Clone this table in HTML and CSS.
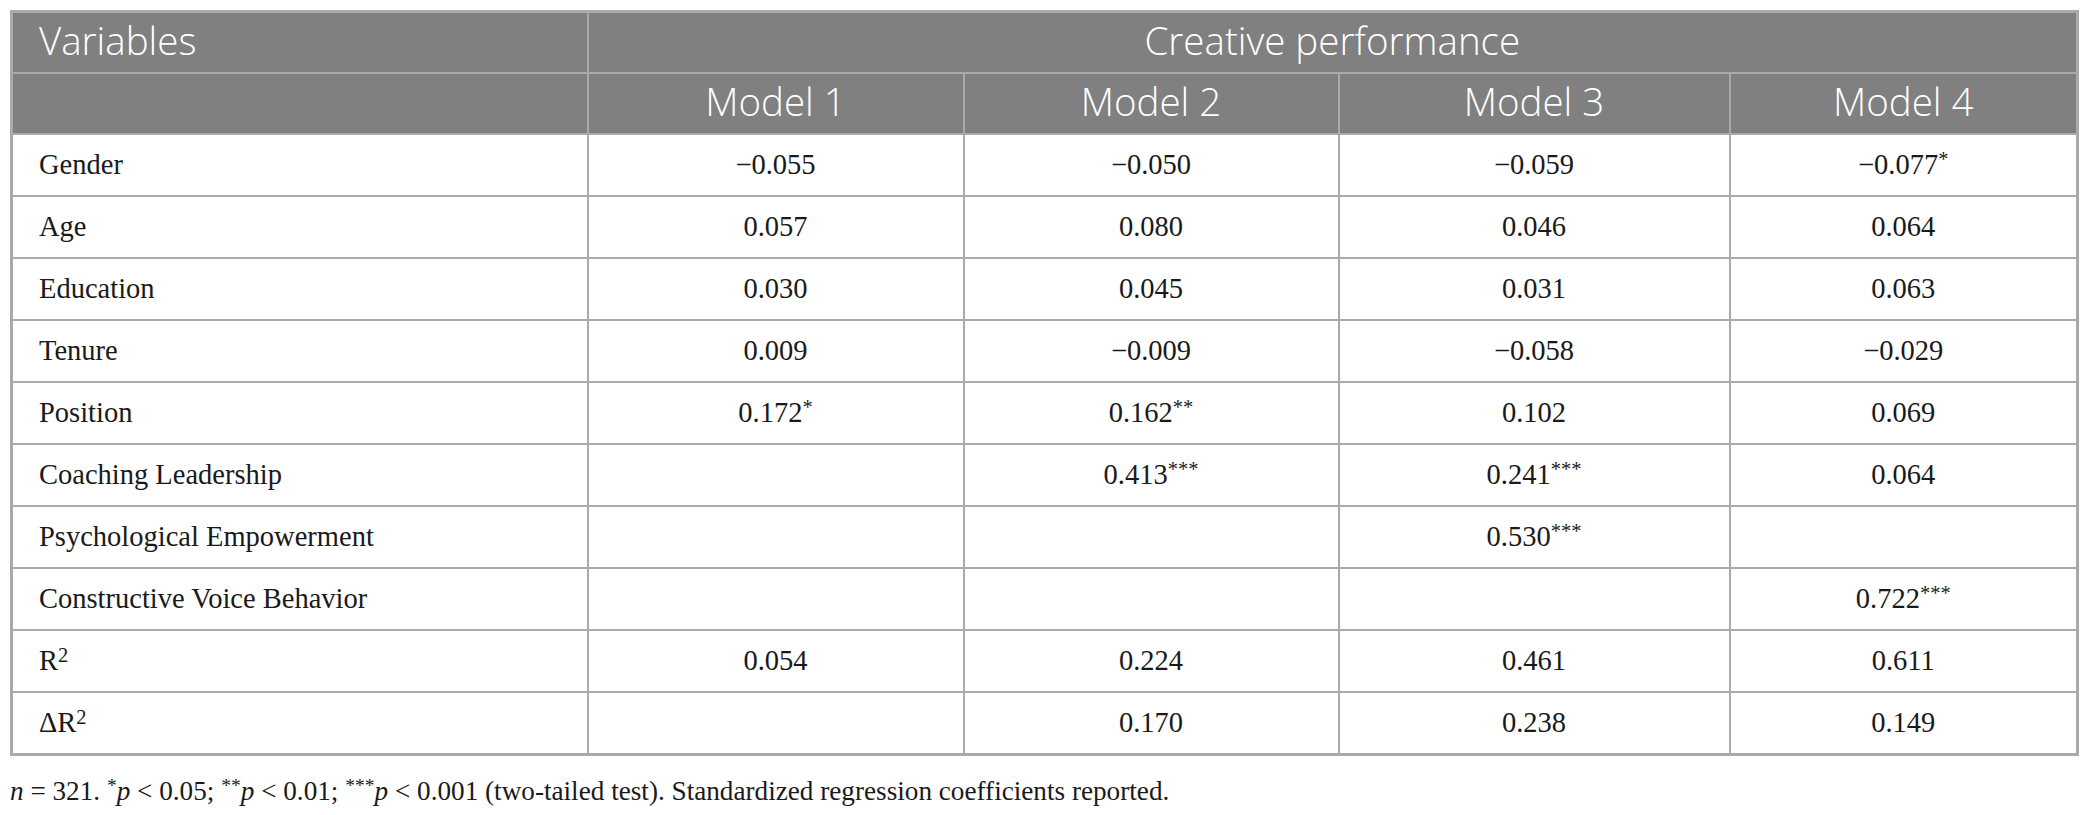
FILE: index.html
```html
<!DOCTYPE html>
<html>
<head>
<meta charset="utf-8">
<link rel="stylesheet" href="styles.css">
</head>
<body>
<div class="wrap">
<table class="reg">
  <colgroup>
    <col class="c-var">
    <col class="c-m1">
    <col class="c-m2">
    <col class="c-m3">
    <col class="c-m4">
  </colgroup>
  <thead>
    <tr>
      <th class="left">Variables</th>
      <th colspan="4">Creative performance</th>
    </tr>
    <tr>
      <th></th>
      <th>Model 1</th>
      <th>Model 2</th>
      <th>Model 3</th>
      <th>Model 4</th>
    </tr>
  </thead>
  <tbody>
    <tr><td class="left">Gender</td><td>&minus;0.055</td><td>&minus;0.050</td><td>&minus;0.059</td><td>&minus;0.077<sup>*</sup></td></tr>
    <tr><td class="left">Age</td><td>0.057</td><td>0.080</td><td>0.046</td><td>0.064</td></tr>
    <tr><td class="left">Education</td><td>0.030</td><td>0.045</td><td>0.031</td><td>0.063</td></tr>
    <tr><td class="left">Tenure</td><td>0.009</td><td>&minus;0.009</td><td>&minus;0.058</td><td>&minus;0.029</td></tr>
    <tr><td class="left">Position</td><td>0.172<sup>*</sup></td><td>0.162<sup>**</sup></td><td>0.102</td><td>0.069</td></tr>
    <tr><td class="left">Coaching Leadership</td><td></td><td>0.413<sup>***</sup></td><td>0.241<sup>***</sup></td><td>0.064</td></tr>
    <tr><td class="left">Psychological Empowerment</td><td></td><td></td><td>0.530<sup>***</sup></td><td></td></tr>
    <tr><td class="left">Constructive Voice Behavior</td><td></td><td></td><td></td><td>0.722<sup>***</sup></td></tr>
    <tr><td class="left">R<sup>2</sup></td><td>0.054</td><td>0.224</td><td>0.461</td><td>0.611</td></tr>
    <tr><td class="left">&Delta;R<sup>2</sup></td><td></td><td>0.170</td><td>0.238</td><td>0.149</td></tr>
  </tbody>
</table>
<p class="note"><i>n</i> = 321. <sup>*</sup><i>p</i> &lt; 0.05; <sup>**</sup><i>p</i> &lt; 0.01; <sup>***</sup><i>p</i> &lt; 0.001 (two-tailed test). Standardized regression coefficients reported.</p>
</div>
</body>
</html>
```

FILE: styles.css
```css
html, body {
  margin: 0;
  padding: 0;
  background: #ffffff;
}

.wrap {
  padding: 10px 0 0 10px;
}

.reg {
  border-collapse: collapse;
  table-layout: fixed;
  width: 2066px;
  border: 3px solid #aaaaaa;
}

.c-var { width: 576px; }
.c-m1 { width: 376px; }
.c-m2 { width: 375px; }
.c-m3 { width: 391px; }
.c-m4 { width: 348px; }

.reg th,
.reg td {
  border: 2px solid #aaaaaa;
  padding: 0 26px;
  text-align: center;
  vertical-align: middle;
}

.reg th {
  background: #808080;
  color: #ffffff;
  font-family: "Open Sans", Lato, sans-serif;
  font-weight: 300;
  font-size: 38.5px;
  height: 55px;
  line-height: 1;
  padding-bottom: 4px;
}

.reg td {
  font-family: "Liberation Serif", "Times New Roman", serif;
  font-size: 28.5px;
  color: #1a1a1a;
  height: 60px;
  line-height: 1;
}

.reg .left {
  text-align: left;
}

.reg sup {
  font-size: 0.72em;
  line-height: 0;
  vertical-align: 0.4em;
}

.note {
  margin: 20px 0 0 0;
  font-family: "Liberation Serif", "Times New Roman", serif;
  font-size: 27.2px;
  color: #1a1a1a;
}

.note sup {
  font-size: 0.72em;
  line-height: 0;
  vertical-align: 0.4em;
}
```
